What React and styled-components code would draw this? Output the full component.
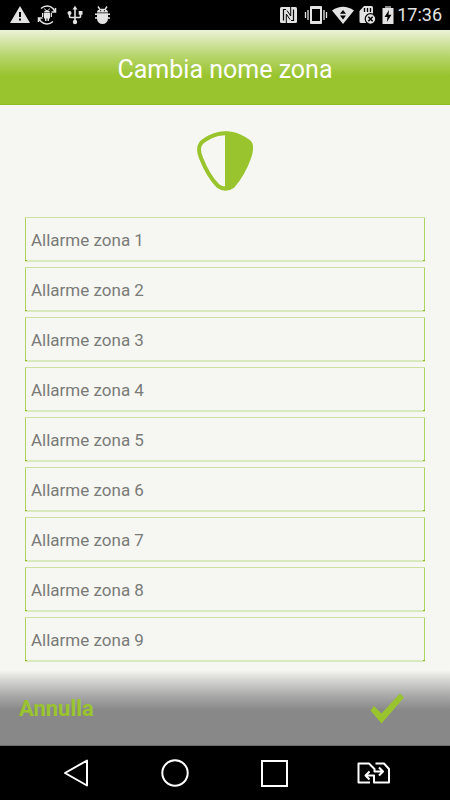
import React from "react";
import styled, { createGlobalStyle } from "styled-components";

const GlobalStyle = createGlobalStyle`
  *, *::before, *::after { box-sizing: border-box; }
  body {
    margin: 0;
    background: #f6f7f2;
    font-family: Roboto, "Noto Sans", sans-serif;
  }
`;

const Screen = styled.div`
  display: flex;
  flex-direction: column;
  min-height: 100vh;
`;

const StatusBar = styled.div`
  display: flex;
  justify-content: space-between;
  align-items: center;
  height: 30px;
  padding: 0 8px 0 10px;
  background: #000;
  color: #e3e3e3;
`;

const StatusGroup = styled.div`
  display: flex;
  align-items: center;
  gap: ${(p) => p.$gap}px;
  svg { display: block; }
`;

const Clock = styled.time`
  font-size: 18px;
  line-height: 30px;
`;

const Header = styled.header`
  display: flex;
  align-items: center;
  justify-content: center;
  height: 75px;
  padding-top: 5px;
  border-bottom: 1px solid #8fbd1f;
  background: linear-gradient(#ebf3d6 0, #d3e4a6 12px, #b3d364 28px, #99c42e 46px);
`;

const Title = styled.h1`
  margin: 0;
  color: #fff;
  font-size: 25px;
  line-height: 32px;
  font-weight: 400;
`;

const Content = styled.main`
  flex: 1;
  display: flex;
  flex-direction: column;
  padding: 26px 25px 8px;
`;

const Emblem = styled.div`
  display: flex;
  justify-content: center;
  margin-bottom: 26px;
  svg { display: block; }
`;

const ZoneList = styled.form`
  display: flex;
  flex-direction: column;
  gap: 5px;
`;

const ZoneInput = styled.input`
  width: 100%;
  height: 45px;
  padding: 2px 6px 1px;
  border: 0;
  border-radius: 0;
  background:
    linear-gradient(#8aba1c, #8aba1c) left bottom 1px / 2px 1px no-repeat,
    linear-gradient(#8aba1c, #8aba1c) right bottom 1px / 2px 1px no-repeat,
    linear-gradient(#cce0a2, #cce0a2) left top / 100% 1px no-repeat,
    linear-gradient(#d9e8bd, #d9e8bd) left bottom / 100% 2px no-repeat,
    linear-gradient(#add360, #add360) left top / 1px 100% no-repeat,
    linear-gradient(#add360, #add360) right top / 1px 100% no-repeat;
  color: #555;
  font-family: inherit;
  font-size: 17px;
  outline: none;
  &::placeholder { color: #7a7b78; opacity: 1; }
  &:focus-visible { outline: 1px solid #99c42e; }
`;

const ActionBar = styled.footer`
  display: flex;
  align-items: center;
  justify-content: space-between;
  height: 76px;
  padding: 3px 44px 0 19px;
  border-bottom: 1px solid #6d6d6d;
  background: linear-gradient(#f6f7f2 0, #d6d6d4 10px, #a8a8a8 26px, #888 40px);
`;

const ActionButton = styled.button`
  padding: 0;
  border: 0;
  background: none;
  color: #99c42e;
  font-family: inherit;
  font-size: 22px;
  line-height: 28px;
  font-weight: 700;
  cursor: pointer;
  svg { display: block; }
`;

const NavBar = styled.nav`
  display: grid;
  grid-template-columns: repeat(4, 1fr);
  height: 54px;
  padding: 0 25px;
  background: #000;
`;

const NavButton = styled.button`
  display: flex;
  align-items: center;
  justify-content: center;
  padding: 0;
  border: 0;
  background: none;
  color: #fff;
  cursor: pointer;
`;

const WarningIcon = () => (
  <svg width="20" height="20" viewBox="0 0 20 20" aria-hidden="true">
    <path d="M10 1 20 18H0Z" fill="currentColor" />
    <path d="M9 7h2v5H9zM9 13.5h2v2H9z" fill="#000" />
  </svg>
);

const SyncIcon = () => (
  <svg width="20" height="20" viewBox="0 0 20 20" aria-hidden="true">
    <g fill="none" stroke="currentColor" strokeWidth="1.5">
      <path d="M4 3.500C7.500.3 13 .3 16 3.500L18 6.500M18.500 3V7h-4" />
      <path d="M16 16.500C12.500 19.700 7 19.700 4 16.500L2 13.500M1.500 17V13h4" />
    </g>
    <path d="M7.500 3.500 8.500 5M12.500 3.500 11.500 5" stroke="currentColor" strokeWidth="1" />
    <path d="M7 7.500C7.200 4 12.800 4 13 7.500ZM7 8h6v5.500H12V16h-1.500v-2.500h-1V16H8v-2.500H7ZM5 8h1.300v4H5zM13.700 8H15v4h-1.300z" fill="currentColor" />
  </svg>
);

const UsbIcon = () => (
  <svg width="22" height="20" viewBox="0 0 22 20" aria-hidden="true">
    <path d="M11 3v13M5.500 7v4.500q0 1 1 1H15.500q1 0 1-1V7" fill="none" stroke="currentColor" strokeWidth="1.600" />
    <path d="M11 .800 13.500 4.500h-5zM14.700 6h3.800v3.800h-3.800z" fill="currentColor" />
    <circle cx="5.500" cy="8" r="2" fill="currentColor" />
    <circle cx="11" cy="17" r="2.200" fill="currentColor" />
  </svg>
);

const BugIcon = () => (
  <svg width="18" height="20" viewBox="0 0 18 20" aria-hidden="true">
    <path d="M4 7.500C4 2.500 15 2.500 15 7.500ZM4 8.500h11v5a5.500 5.500 0 0 1-11 0Z" fill="currentColor" />
    <path d="M5 1.500 7 4.500M14 1.500l-2 3M2 9.200h15M2 13h15" stroke="currentColor" strokeWidth="1.400" />
    <path d="M7 5.300h1.200v1H7zM10.800 5.300H12v1h-1.200z" fill="#000" />
  </svg>
);

const NfcIcon = () => (
  <svg width="20" height="20" viewBox="0 0 20 20" aria-hidden="true">
    <path d="M2.500 2h14Q18 2 18 3.500v13q0 1.500-1.500 1.500h-14Q1 18 1 16.500v-13Q1 2 2.500 2Z" fill="currentColor" />
    <path d="M4.500 15.500v-11H7M14.500 4.500v11H12" fill="none" stroke="#000" strokeWidth="1.200" />
    <path d="M7.300 18V9L11 14.500M11.700 2v9L8 5.500" fill="none" stroke="#000" strokeWidth="1" />
  </svg>
);

const VibrateIcon = () => (
  <svg width="27" height="20" viewBox="0 0 27 20" aria-hidden="true">
    <path fillRule="evenodd" d="M9 1h10q1 0 1 1v16q0 1-1 1H9q-1 0-1-1V2q0-1 1-1Zm1 3v12h8V4Z" fill="currentColor" />
    <path d="M6 5v10M3.500 7v6M22 5v10M24.500 7v6" stroke="currentColor" strokeWidth="1.300" />
  </svg>
);

const WifiIcon = () => (
  <svg width="22" height="20" viewBox="0 0 22 20" aria-hidden="true">
    <path d="M0 5.500Q11-2 22 5.500L11 19Z" fill="currentColor" />
    <path d="M8 8.800 11 5l3 3.800zM8 10.600h6L11 14.400z" fill="#000" />
  </svg>
);

const SdIcon = () => (
  <svg width="20" height="20" viewBox="0 0 20 20" aria-hidden="true">
    <path d="M7 1h7.500Q16 1 16 2.500V18H4q-1.500 0-1.500-1.500V6Z" fill="currentColor" />
    <path d="M7.500 3v4M10.500 3v4M13.500 3v4" stroke="#000" strokeWidth="1.300" />
    <circle cx="13.500" cy="14" r="5.300" fill="currentColor" stroke="#000" strokeWidth="1.200" />
    <path d="m11.300 11.800 4.400 4.400m0-4.400-4.400 4.400" stroke="#000" strokeWidth="1.500" />
  </svg>
);

const BatteryIcon = () => (
  <svg width="14" height="20" viewBox="0 0 14 20" aria-hidden="true">
    <path d="M5 1h6v2H5z" fill="#888" />
    <path d="M2.500 3h11v16h-11z" fill="currentColor" />
    <path d="M9 5 4.500 12h3L6.800 17l4.700-7.200h-3Z" fill="#000" />
  </svg>
);

const ShieldIcon = () => (
  <svg width="56" height="60" viewBox="0 0 56 60" aria-hidden="true">
    <path
      d="M28 2.200C35 2.200 38 3 42 5C47 7.500 51 9 53 12C55 15 54 22 52 27C48 38 42 48 36 55C31 58.500 26 58.500 21 55C14 48 8 37 4 27C2 22 1.500 16 3.500 13C5.500 9.500 9 8 14 5.500C18 3.500 21 2.200 28 2.200Z"
      fill="none" stroke="#99c42e" strokeWidth="4"
    />
    <path
      d="M28 .500C36 .500 40 3 45 5.500C50 8 55.500 10 55.500 15C55.500 24 51 34 46 42C41 50 36 58 28 59Z"
      fill="#99c42e"
    />
  </svg>
);

const CheckIcon = () => (
  <svg width="36" height="32" viewBox="0 0 36 32" aria-hidden="true">
    <path d="M4 13 11.500 20.500 30 .500 34 4.500 11.500 30.500 .500 17.500Z" fill="currentColor" />
  </svg>
);

const BackIcon = () => (
  <svg width="28" height="30" viewBox="0 0 28 30" aria-hidden="true">
    <path d="M26 2.500v25L4 15Z" fill="none" stroke="currentColor" strokeWidth="2" strokeLinejoin="round" />
  </svg>
);

const HomeIcon = () => (
  <svg width="28" height="28" viewBox="0 0 28 28" aria-hidden="true">
    <circle cx="14" cy="14" r="12.700" fill="none" stroke="currentColor" strokeWidth="2" />
  </svg>
);

const RecentIcon = () => (
  <svg width="28" height="28" viewBox="0 0 28 28" aria-hidden="true">
    <path d="M1 2h25v25H1z" fill="none" stroke="currentColor" strokeWidth="2" />
  </svg>
);

const SwitchIcon = () => (
  <svg width="36" height="22" viewBox="0 0 36 22" aria-hidden="true">
    <g fill="none" stroke="currentColor" strokeWidth="2" strokeLinejoin="round">
      <path d="M13 20.500H1.500v-19h10.500L17.500 7v2.500H25.500M22 5.500l4 4-4 4" />
      <path d="M18.500 1.500h8.500L32 7v13.500H17V13.500H9M12.500 9.500l-4 4 4 4" />
    </g>
  </svg>
);

const zones = Array.from({ length: 9 }, (_, i) => `Allarme zona ${i + 1}`);

const navItems = [
  { label: "Indietro", Icon: BackIcon },
  { label: "Home", Icon: HomeIcon },
  { label: "Recenti", Icon: RecentIcon },
  { label: "Cambia SIM", Icon: SwitchIcon },
];

export default function App() {
  return (
    <>
      <GlobalStyle />
      <Screen>
        <StatusBar>
          <StatusGroup $gap={7}>
            <WarningIcon />
            <SyncIcon />
            <UsbIcon />
            <BugIcon />
          </StatusGroup>
          <StatusGroup $gap={3}>
            <NfcIcon />
            <VibrateIcon />
            <WifiIcon />
            <SdIcon />
            <BatteryIcon />
            <Clock>17:36</Clock>
          </StatusGroup>
        </StatusBar>
        <Header>
          <Title>Cambia nome zona</Title>
        </Header>
        <Content>
          <Emblem>
            <ShieldIcon />
          </Emblem>
          <ZoneList id="zones" onSubmit={(e) => e.preventDefault()}>
            {zones.map((zone) => (
              <ZoneInput key={zone} type="text" placeholder={zone} aria-label={zone} />
            ))}
          </ZoneList>
        </Content>
        <ActionBar>
          <ActionButton type="reset" form="zones">Annulla</ActionButton>
          <ActionButton type="submit" form="zones" aria-label="Conferma">
            <CheckIcon />
          </ActionButton>
        </ActionBar>
        <NavBar>
          {navItems.map(({ label, Icon }) => (
            <NavButton key={label} type="button" aria-label={label}>
              <Icon />
            </NavButton>
          ))}
        </NavBar>
      </Screen>
    </>
  );
}
